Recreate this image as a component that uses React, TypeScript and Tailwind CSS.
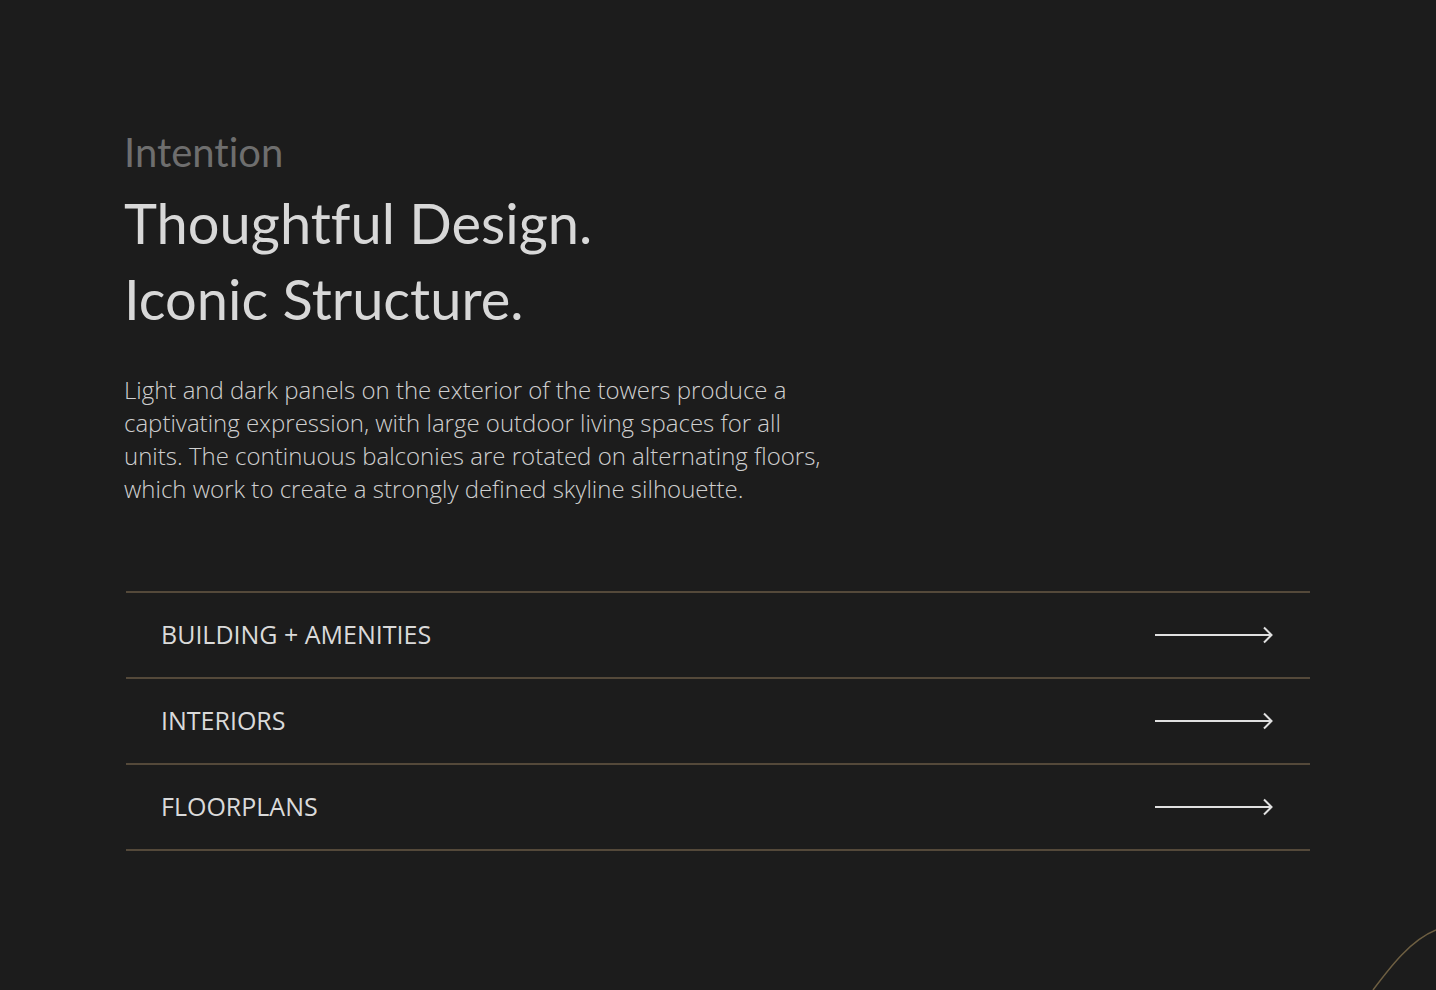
const rows = ["BUILDING + AMENITIES", "INTERIORS", "FLOORPLANS"];

function Arrow() {
  return (
    <svg width="119" height="20" viewBox="0 0 119 20" fill="none" className="text-[#e0e0e0]">
      <path d="M0 10H117" stroke="currentColor" strokeWidth="2" />
      <path d="M109 2.5L116.5 10L109 17.5" stroke="currentColor" strokeWidth="2" />
    </svg>
  );
}

export default function App() {
  return (
    <div className="relative w-full h-[990px] overflow-hidden bg-[#1c1c1c]">
      <div className="pl-[124px] pt-[128px] pr-[126px]">
        <p className="font-['Lato',sans-serif] [font-variant-ligatures:none] text-[40px] leading-[48px] text-[#6e6e6e]">
          Intention
        </p>
        <h2 className="mt-[9px] font-['Lato',sans-serif] [font-variant-ligatures:none] text-[56px] leading-[76px] text-[#d8d8d8]">
          Thoughtful Design.
          <br />
          Iconic Structure.
        </h2>
        <p className="mt-[36px] w-[710px] font-['Open_Sans',sans-serif] font-light text-[24px] leading-[33px] text-[#cfcfcf]">
          Light and dark panels on the exterior of the towers produce a captivating expression, with large outdoor
          living spaces for all units. The continuous balconies are rotated on alternating floors, which work to
          create a strongly defined skyline silhouette.
        </p>
        <div className="mt-[86px] ml-[2px] border-t-2 border-[#54493a]">
          {rows.map((r) => (
            <div key={r} className="flex items-center justify-between h-[86px] border-b-2 border-[#54493a] pl-[35px] pr-[36px]">
              <span className="font-['Open_Sans',sans-serif] text-[25px] text-[#dadada]">{r}</span>
              <Arrow />
            </div>
          ))}
        </div>
      </div>
      <svg className="absolute right-0 bottom-0" width="70" height="64" viewBox="0 0 70 64" fill="none">
        <path d="M7 64C25 40 45 14 70 4" stroke="#6e5f42" strokeWidth="1.5" />
      </svg>
    </div>
  );
}
